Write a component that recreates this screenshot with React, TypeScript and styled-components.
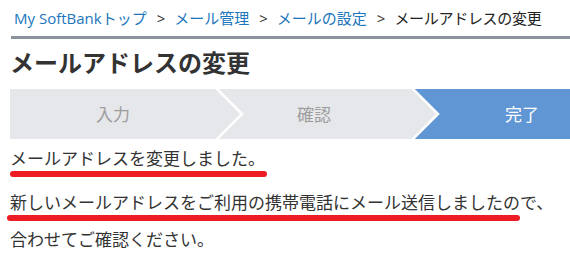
import React from "react";
import styled, {createGlobalStyle} from "styled-components";

const GlobalStyle = createGlobalStyle`
  html, body {
    margin: 0;
    padding: 0;
    background: #fff;
    overflow: hidden;
  }
  body {
    font-family: "Noto Sans CJK JP", "Open Sans", sans-serif;
    color: #333;
  }
`;

const StyledPage = styled.div`
  width: 570px;
  height: 261px;
  overflow: hidden;
`;

const StyledBreadcrumb = styled.div`
  display: flex;
  align-items: center;
  padding: 6px 0 0 14px;
  height: 24px;
  font-size: 15px;
  line-height: 24px;
  white-space: nowrap;
  font-family: "Open Sans", "Noto Sans CJK JP", sans-serif;
`;

const StyledCrumbLink = styled.a`
  color: #1c76bc;
  text-decoration: none;
`;

const StyledCrumbSep = styled.span`
  color: #333;
  padding: 0 9px 0 10px;
`;

const StyledCrumbCurrent = styled.span`
  color: #222;
  letter-spacing: -0.3px;
`;

const StyledRule = styled.div`
  margin: 6px 0 0 11px;
  height: 3px;
  background: #8b949c;
`;

const StyledTitle = styled.h1`
  margin: 9px 0 0 10px;
  font-size: 24px;
  line-height: 28px;
  font-weight: 700;
  color: #333;
`;

const StyledSteps = styled.ol`
  display: flex;
  list-style: none;
  margin: 13px 0 0 10px;
  padding: 0;
  height: 50px;
  overflow: hidden;
`;

const StyledStep = styled.li<{ $active?: boolean; $width?: number; $offset?: number }>`
  position: relative;
  flex: ${p => (p.$width ? `0 0 ${p.$width}px` : "1 1 auto")};
  display: flex;
  align-items: center;
  justify-content: center;
  padding-left: ${p => p.$offset ?? 0}px;
  background: ${p => (p.$active ? "#6196d5" : "#e6e7ea")};
  color: ${p => (p.$active ? "#fff" : "#9d9d9d")};
  font-size: 17px;
  line-height: 50px;
`;

const StyledArrow = styled.svg`
  position: absolute;
  top: 0;
  left: 100%;
  z-index: 1;
  overflow: visible;
`;

const StepArrow = () => (
    <StyledArrow width="30" height="50" viewBox="0 0 30 50">
        <polygon points="0,0 26,25 0,50" fill="#e6e7ea"/>
        <polyline points="-1,-2 26,25 -1,52" fill="none" stroke="#fff" strokeWidth="2.5"/>
    </StyledArrow>
);

const StyledMessage = styled.p<{ $gap: number }>`
  margin: ${p => p.$gap}px 0 0 10px;
  font-size: 17px;
  line-height: 24px;
  color: #333;
  white-space: nowrap;
`;

const StyledMark = styled.div<{ $left: number; $width: number }>`
  margin: 1px 0 0 ${p => p.$left}px;
  width: ${p => p.$width}px;
  height: 6px;
  border-radius: 3px;
  background: #ed1c24;
`;

export default function App() {
    return (
        <StyledPage>
            <GlobalStyle/>
            <StyledBreadcrumb>
                <StyledCrumbLink href="#">My SoftBankトップ</StyledCrumbLink>
                <StyledCrumbSep>&gt;</StyledCrumbSep>
                <StyledCrumbLink href="#">メール管理</StyledCrumbLink>
                <StyledCrumbSep>&gt;</StyledCrumbSep>
                <StyledCrumbLink href="#">メールの設定</StyledCrumbLink>
                <StyledCrumbSep>&gt;</StyledCrumbSep>
                <StyledCrumbCurrent>メールアドレスの変更</StyledCrumbCurrent>
            </StyledBreadcrumb>
            <StyledRule/>
            <StyledTitle>メールアドレスの変更</StyledTitle>
            <StyledSteps>
                <StyledStep $width={206}>入力<StepArrow/></StyledStep>
                <StyledStep $width={196}>確認<StepArrow/></StyledStep>
                <StyledStep $active $offset={62}>完了</StyledStep>
            </StyledSteps>
            <StyledMessage $gap={7}>メールアドレスを変更しました。</StyledMessage>
            <StyledMark $left={10} $width={257}/>
            <StyledMessage $gap={13}>新しいメールアドレスをご利用の携帯電話にメール送信しましたので、</StyledMessage>
            <StyledMark $left={7} $width={513}/>
            <StyledMessage $gap={6}>合わせてご確認ください。</StyledMessage>
        </StyledPage>
    );
}
